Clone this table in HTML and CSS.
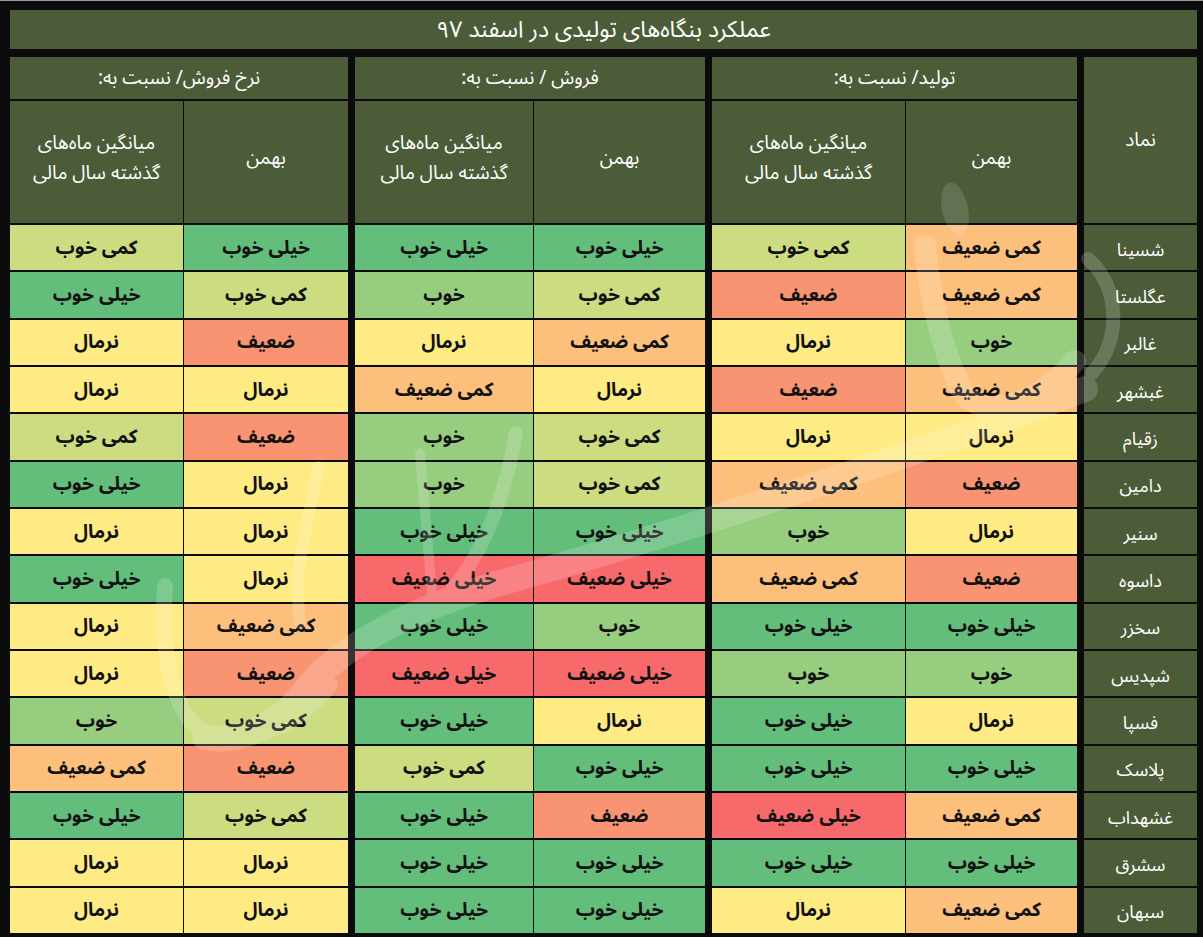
FILE: index.html
```html
<!DOCTYPE html>
<html lang="fa" dir="rtl">
<head>
<meta charset="utf-8">
<title>عملکرد بنگاه‌های تولیدی در اسفند ۹۷</title>
<link rel="stylesheet" href="styles.css">
</head>
<body>
<div class="frame">
  <div class="title">عملکرد بنگاه‌های تولیدی در اسفند ۹۷</div>
  <div class="table">
    <div class="hd namad">نماد</div>
    <div class="hd grp g1">تولید/ نسبت به:</div>
    <div class="hd grp g2">فروش / نسبت به:</div>
    <div class="hd grp g3">نرخ فروش/ نسبت به:</div>
    <div class="hd sub c1">بهمن</div>
    <div class="hd sub c2"><div class="two"><span class="ln">میانگین ماه‌های</span><span class="ln">گذشته سال مالی</span></div></div>
    <div class="hd sub c3">بهمن</div>
    <div class="hd sub c4"><div class="two"><span class="ln">میانگین ماه‌های</span><span class="ln">گذشته سال مالی</span></div></div>
    <div class="hd sub c5">بهمن</div>
    <div class="hd sub c6"><div class="two"><span class="ln">میانگین ماه‌های</span><span class="ln">گذشته سال مالی</span></div></div>

    <div class="sym cn">شسینا</div><div class="cell c1 lw">کمی ضعیف</div><div class="cell c2 lg">کمی خوب</div><div class="cell c3 vg">خیلی خوب</div><div class="cell c4 vg">خیلی خوب</div><div class="cell c5 vg">خیلی خوب</div><div class="cell c6 lg">کمی خوب</div>
    <div class="sym cn">عگلستا</div><div class="cell c1 lw">کمی ضعیف</div><div class="cell c2 w">ضعیف</div><div class="cell c3 lg">کمی خوب</div><div class="cell c4 g">خوب</div><div class="cell c5 lg">کمی خوب</div><div class="cell c6 vg">خیلی خوب</div>
    <div class="sym cn">غالبر</div><div class="cell c1 g">خوب</div><div class="cell c2 n">نرمال</div><div class="cell c3 lw">کمی ضعیف</div><div class="cell c4 n">نرمال</div><div class="cell c5 w">ضعیف</div><div class="cell c6 n">نرمال</div>
    <div class="sym cn">غبشهر</div><div class="cell c1 lw">کمی ضعیف</div><div class="cell c2 w">ضعیف</div><div class="cell c3 n">نرمال</div><div class="cell c4 lw">کمی ضعیف</div><div class="cell c5 n">نرمال</div><div class="cell c6 n">نرمال</div>
    <div class="sym cn">زقیام</div><div class="cell c1 n">نرمال</div><div class="cell c2 n">نرمال</div><div class="cell c3 lg">کمی خوب</div><div class="cell c4 g">خوب</div><div class="cell c5 w">ضعیف</div><div class="cell c6 lg">کمی خوب</div>
    <div class="sym cn">دامین</div><div class="cell c1 w">ضعیف</div><div class="cell c2 lw">کمی ضعیف</div><div class="cell c3 lg">کمی خوب</div><div class="cell c4 g">خوب</div><div class="cell c5 n">نرمال</div><div class="cell c6 vg">خیلی خوب</div>
    <div class="sym cn">سنیر</div><div class="cell c1 n">نرمال</div><div class="cell c2 g">خوب</div><div class="cell c3 vg">خیلی خوب</div><div class="cell c4 vg">خیلی خوب</div><div class="cell c5 n">نرمال</div><div class="cell c6 n">نرمال</div>
    <div class="sym cn">داسوه</div><div class="cell c1 w">ضعیف</div><div class="cell c2 lw">کمی ضعیف</div><div class="cell c3 vw">خیلی ضعیف</div><div class="cell c4 vw">خیلی ضعیف</div><div class="cell c5 n">نرمال</div><div class="cell c6 vg">خیلی خوب</div>
    <div class="sym cn">سخزر</div><div class="cell c1 vg">خیلی خوب</div><div class="cell c2 vg">خیلی خوب</div><div class="cell c3 g">خوب</div><div class="cell c4 vg">خیلی خوب</div><div class="cell c5 lw">کمی ضعیف</div><div class="cell c6 n">نرمال</div>
    <div class="sym cn">شپدیس</div><div class="cell c1 g">خوب</div><div class="cell c2 g">خوب</div><div class="cell c3 vw">خیلی ضعیف</div><div class="cell c4 vw">خیلی ضعیف</div><div class="cell c5 w">ضعیف</div><div class="cell c6 n">نرمال</div>
    <div class="sym cn">فسپا</div><div class="cell c1 n">نرمال</div><div class="cell c2 vg">خیلی خوب</div><div class="cell c3 n">نرمال</div><div class="cell c4 vg">خیلی خوب</div><div class="cell c5 lg">کمی خوب</div><div class="cell c6 g">خوب</div>
    <div class="sym cn">پلاسک</div><div class="cell c1 vg">خیلی خوب</div><div class="cell c2 vg">خیلی خوب</div><div class="cell c3 vg">خیلی خوب</div><div class="cell c4 lg">کمی خوب</div><div class="cell c5 w">ضعیف</div><div class="cell c6 lw">کمی ضعیف</div>
    <div class="sym cn">غشهداب</div><div class="cell c1 lw">کمی ضعیف</div><div class="cell c2 vw">خیلی ضعیف</div><div class="cell c3 w">ضعیف</div><div class="cell c4 vg">خیلی خوب</div><div class="cell c5 lg">کمی خوب</div><div class="cell c6 vg">خیلی خوب</div>
    <div class="sym cn">سشرق</div><div class="cell c1 vg">خیلی خوب</div><div class="cell c2 vg">خیلی خوب</div><div class="cell c3 vg">خیلی خوب</div><div class="cell c4 vg">خیلی خوب</div><div class="cell c5 n">نرمال</div><div class="cell c6 n">نرمال</div>
    <div class="sym cn">سبهان</div><div class="cell c1 lw">کمی ضعیف</div><div class="cell c2 n">نرمال</div><div class="cell c3 vg">خیلی خوب</div><div class="cell c4 vg">خیلی خوب</div><div class="cell c5 n">نرمال</div><div class="cell c6 n">نرمال</div>
  </div>
  <svg class="watermark" width="1203" height="937" viewBox="0 0 1203 937" aria-hidden="true">
    <g fill="none" stroke="#ffffff" stroke-linecap="round" stroke-linejoin="round" opacity="0.17">
      <path d="M925,245 C930,300 945,360 965,395 C990,420 1040,400 1075,360" stroke-width="22"/>
      <path d="M1088,258 C1120,285 1122,340 1092,372" stroke-width="14"/>
      <path d="M1085,388 C900,460 650,540 500,582 C400,612 335,650 305,690 C275,728 235,742 205,736" stroke-width="26"/>
      <path d="M165,585 C160,650 172,716 208,734 C250,746 300,722 330,684" stroke-width="16"/>
      <path d="M516,432 C506,492 482,560 442,600" stroke-width="14"/>
      <path d="M420,452 C424,500 428,550 432,592" stroke-width="10"/>
      <path d="M318,466 C310,520 292,562 300,622" stroke-width="12"/>
    </g>
    <ellipse cx="955" cy="208" rx="13" ry="27" transform="rotate(-12 955 208)" fill="#ffffff" opacity="0.13"/>
  </svg>
</div>
</body>
</html>
```

FILE: styles.css
```css
* { box-sizing: border-box; }

html, body {
  margin: 0;
  padding: 0;
  background: #0b0b0b;
}

body {
  width: 1203px;
  height: 937px;
  overflow: hidden;
  font-family: "Noto Sans Arabic", "Noto Naskh Arabic", "Vazirmatn", "DejaVu Sans", sans-serif;
}

.frame {
  position: relative;
  width: 1203px;
  height: 937px;
  padding: 9px 6px 0 10px;
  border-top: 1px solid #9c9c9c;
  background: #0b0b0b;
}

.title {
  height: 39px;
  background: #4c5b38;
  color: #ffffff;
  font-size: 23px;
  line-height: 39px;
  text-align: center;
  margin-bottom: 8px;
}

.table {
  display: grid;
  grid-template-columns: 113px 5px 171px 193px 5px 171px 178px 5px 164px 173px;
  grid-template-rows: 42px 122px repeat(15, 45.33px);
  column-gap: 1px;
  row-gap: 2px;
}

.hd {
  background: #4c5b38;
  color: #ffffff;
  font-size: 19px;
  display: flex;
  align-items: center;
  justify-content: center;
  text-align: center;
}

.two {
  display: flex;
  flex-direction: column;
  align-items: center;
  gap: 4px;
}

.ln {
  display: block;
  line-height: 26px;
}

.namad { grid-column: 1; grid-row: 1 / 3; }
.g1 { grid-column: 3 / 5; grid-row: 1; }
.g2 { grid-column: 6 / 8; grid-row: 1; }
.g3 { grid-column: 9 / 11; grid-row: 1; }
.sub { grid-row: 2; padding-bottom: 8px; }

.cn { grid-column: 1; }
.c1 { grid-column: 3; }
.c2 { grid-column: 4; }
.c3 { grid-column: 6; }
.c4 { grid-column: 7; }
.c5 { grid-column: 9; }
.c6 { grid-column: 10; }

.sym {
  background: #4c5b38;
  color: #ffffff;
  font-size: 18px;
  display: flex;
  align-items: center;
  justify-content: center;
  padding-top: 4px;
}

.cell {
  display: flex;
  align-items: center;
  justify-content: center;
  font-size: 19px;
  font-weight: 700;
  color: #111111;
}

.vg { background: #63be7b; }
.g  { background: #97cd7e; }
.lg { background: #cbdc81; }
.n  { background: #ffeb84; }
.lw { background: #fdc07c; }
.w  { background: #f99473; }
.vw { background: #f8696b; }

.watermark {
  position: absolute;
  left: 0;
  top: 0;
  pointer-events: none;
}
```
